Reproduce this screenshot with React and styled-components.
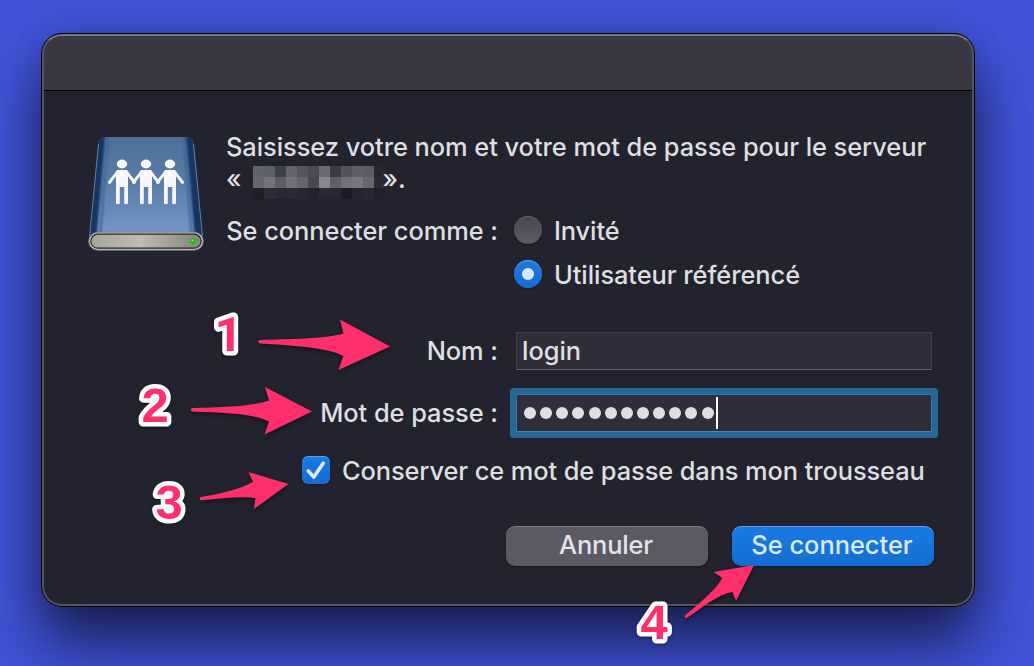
import React from 'react';
import styled, { createGlobalStyle, css } from 'styled-components';

const GlobalStyle = createGlobalStyle`
  *, *::before, *::after { box-sizing: border-box; }
  html, body { margin: 0; height: 100%; overflow: hidden; }
  body { background: #4152d6; }
`;

const Desktop = styled.main`
  position: relative;
  width: 1034px;
  height: 666px;
  padding: 33px 59px 59px 41px;
  overflow: hidden;
  background: #4153d8;
  font-family: Inter, 'Liberation Sans', sans-serif;
  font-size: 25.4px;
  font-weight: 450;
  line-height: 32px;
  color: #dfdfe1;
`;

const Dialog = styled.section`
  display: flex;
  flex-direction: column;
  height: 574px;
  border: 1px solid #000;
  border-radius: 21px;
  background: #22232f;
  overflow: hidden;
  position: relative;

  &::after {
    content: '';
    position: absolute;
    inset: 0;
    border: 2px solid #55555f;
    border-top-color: #77777f;
    border-radius: 20px;
    pointer-events: none;
  }
`;

const Shadow = styled.div`
  border-radius: 21px;
  box-shadow: 0 36px 60px rgba(0, 0, 0, 0.62), 0 0 30px rgba(0, 0, 0, 0.12);
`;

const TitleBar = styled.header`
  height: 57px;
  flex: none;
  background: #393842;
  border-bottom: 1px solid #000;
`;

const Body = styled.div`
  display: grid;
  grid-template-columns: 116px 1fr;
  column-gap: 22px;
  padding: 40px 36px 0 46px;
`;

const IconCell = styled.div`
  padding-top: 5px;
  svg { display: block; }
`;

const Content = styled.div`
  display: flex;
  flex-direction: column;
  min-width: 0;
`;

const Text = styled.span`
  white-space: pre;
  letter-spacing: ${(p) => p.$track || 0}px;
`;

const Message = styled.div`
  display: flex;
  flex-direction: column;
  height: 64px;
  margin-bottom: 20px;
`;

const MessageLine = styled.div`
  display: flex;
  height: 32px;
`;

const Redaction = styled.span`
  display: grid;
  grid-template-columns: repeat(12, 11px);
  grid-auto-rows: 11px;
  width: 129px;
  margin: 3px 0 0 12px;
`;

const Block = styled.i`
  background: ${(p) => p.$tone};
`;

const FormRow = styled.div`
  display: grid;
  grid-template-columns: 272px 1fr;
  column-gap: 17px;
  height: 32px;
  margin-bottom: ${(p) => p.$gap}px;
`;

const Label = styled.label`
  text-align: right;
  white-space: pre;
  letter-spacing: -0.04px;
`;

const Option = styled.div`
  display: flex;
  gap: 12px;
`;

const blueFill = css`
  background: linear-gradient(#187be6, #166dd0);
  box-shadow: inset 0 1px 0 rgba(255, 255, 255, 0.28), 0 1px 2px rgba(0, 0, 0, 0.35);
`;

const greyFill = css`
  background: linear-gradient(#474650, #5d5d67);
  box-shadow: inset 0 1px 0 rgba(255, 255, 255, 0.14), 0 1px 2px rgba(0, 0, 0, 0.35);
`;

const Radio = styled.span`
  display: flex;
  align-items: center;
  justify-content: center;
  width: 28px;
  height: 28px;
  margin: 1px 0 0 -1px;
  border-radius: 50%;
  ${(p) => (p.$checked ? blueFill : greyFill)}

  &::after {
    content: '';
    width: 12px;
    height: 12px;
    border-radius: 50%;
    background: ${(p) => (p.$checked ? '#dce9fa' : 'transparent')};
  }
`;

const Field = styled.div`
  display: flex;
  align-items: center;
  width: 416px;
  height: 38px;
  margin: -3px 0 0 1px;
  padding: 0 0 0 5px;
  background: #2f2e3a;
  border: 1px solid #403f4a;
  border-bottom-color: #686771;
  ${(p) =>
    p.$focused &&
    css`
      border-color: #2f79ad;
      border-bottom-color: #4388b8;
      box-shadow: 0 0 0 6px #276796;
      border-radius: 1px;
    `}
`;

const Dots = styled.span`
  display: flex;
  gap: 4.15px;
  margin-left: 2px;
`;

const Dot = styled.i`
  width: 12px;
  height: 12px;
  border-radius: 50%;
  background: #dfdfe1;
`;

const Caret = styled.span`
  width: 2px;
  height: 32px;
  margin-left: 2px;
  background: #fff;
`;

const CheckRow = styled.div`
  display: flex;
  gap: 12px;
  height: 32px;
  margin: 0 0 39px 76px;
`;

const Checkbox = styled.span`
  width: 28px;
  height: 28px;
  margin-top: 1px;
  border-radius: 6px;
  ${blueFill}
  svg { display: block; }
`;

const Actions = styled.div`
  display: flex;
  gap: 24px;
  padding-left: 280px;
`;

const Button = styled.button`
  width: 202px;
  height: 40px;
  padding: 0 2px 2px 0;
  border: 0;
  border-radius: 9px;
  font: inherit;
  line-height: 36px;
  color: #e3e3e5;
  background: #5b5a64;
  box-shadow: inset 0 1px 0 rgba(255, 255, 255, 0.2), 0 1px 2px rgba(0, 0, 0, 0.4);
  ${(p) =>
    p.$primary &&
    css`
      ${blueFill}
      color: #dce9fb;
    `}
`;

const Annotations = styled.svg`
  position: absolute;
  inset: 0;
  pointer-events: none;
`;

const Arrows = styled.g`
  fill: #ff2f6d;
  filter: drop-shadow(0 2px 2px rgba(0, 0, 0, 0.45));
`;

const StepNumber = styled.text`
  font: bold 49px ${(p) => (p.$face ? `${p.$face}, ` : '')}'Liberation Sans', sans-serif;
  fill: #ff2f6d;
  stroke: #fff;
  stroke-width: 9px;
  stroke-linejoin: round;
  paint-order: stroke fill;
  filter: drop-shadow(0 1px 1.5px rgba(0, 0, 0, 0.45));
`;

const tones = [
  '#62626d', '#5b6069', '#3f3f4b', '#63636d', '#54545f', '#4b4b56', '#696973', '#3b3b47', '#53535e', '#5e5e69', '#5c5c67', '#272733',
  '#666671', '#73737e', '#5d5d68', '#70707a', '#64646f', '#484853', '#87878c', '#5f5f69', '#70707b', '#767681', '#66666f', '#2b2b37',
  '#1f1f2c', '#2e2b37', '#292935', '#2c2835', '#272733', '#22222f', '#282935', '#282935', '#1b1b29', '#242531', '#272834', '#20212d',
];

function Person({ x }) {
  return (
    <g transform={`translate(${x} 0)`} fill="none" stroke="#f6f7f9" strokeLinecap="round" strokeLinejoin="round">
      <ellipse cx="0" cy="28" rx="5.2" ry="4.4" fill="#f6f7f9" stroke="none" />
      <path d="M-4 34H4Q5.500 34 6 36V51H-6V36Q-5.500 34 -4 34Z" fill="#f6f7f9" stroke="none" />
      <path d="M-4.500 35.8L-12.500 46.400M4.500 35.8L12.500 46.400" strokeWidth="3" />
      <path d="M-4.1 48V66.400M4.1 48V66.400" strokeWidth="3.800" />
    </g>
  );
}

function ServerDrive() {
  return (
    <svg width="116" height="116" viewBox="0 0 116 116">
      <defs>
        <linearGradient id="face" x1="0" y1="0" x2="0" y2="1">
          <stop offset="0" stopColor="#4b7098" />
          <stop offset="0.5" stopColor="#5b7fab" />
          <stop offset="1" stopColor="#7798c4" />
        </linearGradient>
        <linearGradient id="base" x1="0" y1="0" x2="1" y2="0">
          <stop offset="0" stopColor="#a6a59f" />
          <stop offset="0.45" stopColor="#bebbb2" />
          <stop offset="1" stopColor="#858276" />
        </linearGradient>
        <filter id="soften" x="-20%" y="-5%" width="140%" height="110%">
          <feGaussianBlur stdDeviation="1 0" />
        </filter>
        <clipPath id="shell">
          <path d="M17 1H99Q105 1 106 8L115 102H1L10 8Q11 1 17 1Z" />
        </clipPath>
      </defs>
      <g clipPath="url(#shell)">
        <rect width="116" height="102" fill="url(#face)" />
        <g filter="url(#soften)">
          <path d="M10 0H17L8.500 102H0V98Z" fill="#123461" />
          <path d="M98 0H106L116 98V102H107Z" fill="#123461" />
          <path d="M20 0L12 102" fill="none" stroke="#3d6496" strokeWidth="2" />
          <path d="M95.500 0L104 102" fill="none" stroke="#3d6496" strokeWidth="2" />
        </g>
        <path d="M10.500 8L1.500 100M105.500 8L114.500 100" stroke="#6f8cb2" strokeWidth="0.9" />
      </g>
      <Person x={34} />
      <Person x={58} />
      <Person x={82} />
      <rect x="0.7" y="96.2" width="114.6" height="18" rx="9" fill="#c8c8c4" stroke="#747a80" strokeWidth="0.8" />
      <rect x="2.8" y="98.2" width="110.4" height="14" rx="7" fill="url(#base)" stroke="#242424" strokeWidth="1.2" />
      <circle cx="104.8" cy="105.2" r="2.9" fill="#12c512" />
      <circle cx="104.5" cy="104.6" r="1.2" fill="#47f13c" />
    </svg>
  );
}

export default function App() {
  return (
    <Desktop>
      <GlobalStyle />
      <Shadow>
        <Dialog>
          <TitleBar />
          <Body>
            <IconCell><ServerDrive /></IconCell>
            <Content>
              <Message>
                <MessageLine>
                  <Text $track={-0.04}>Saisissez votre nom et votre mot de passe pour le serveur</Text>
                </MessageLine>
                <MessageLine>
                  <Text>«</Text>
                  <Redaction>
                    {tones.map((tone, i) => <Block key={i} $tone={tone} />)}
                  </Redaction>
                  <Text>».</Text>
                </MessageLine>
              </Message>

              <FormRow $gap={12}>
                <Label>Se connecter comme :</Label>
                <Option><Radio /><Text $track={-0.1}>Invité</Text></Option>
              </FormRow>
              <FormRow $gap={44}>
                <span />
                <Option><Radio $checked /><Text $track={-0.05}>Utilisateur référencé</Text></Option>
              </FormRow>
              <FormRow $gap={30}>
                <Label>Nom :</Label>
                <Field><Text>login</Text></Field>
              </FormRow>
              <FormRow $gap={26}>
                <Label>Mot de passe :</Label>
                <Field $focused>
                  <Dots>{Array.from({ length: 12 }, (_, i) => <Dot key={i} />)}</Dots>
                  <Caret />
                </Field>
              </FormRow>
              <CheckRow>
                <Checkbox>
                  <svg width="28" height="28" viewBox="0 0 28 28" fill="none">
                    <path d="M6.3 15L11.8 21L21.2 7.2" stroke="#dfeafa" strokeWidth="3.6" strokeLinecap="round" strokeLinejoin="round" />
                  </svg>
                </Checkbox>
                <Text $track={-0.09}>Conserver ce mot de passe dans mon trousseau</Text>
              </CheckRow>
              <Actions>
                <Button><Text $track={-0.15}>Annuler</Text></Button>
                <Button $primary><Text>Se connecter</Text></Button>
              </Actions>
            </Content>
          </Body>
        </Dialog>
      </Shadow>

      <Annotations width="1034" height="666" viewBox="0 0 1034 666">
        <Arrows>
          <path d="M260 340C290 339 325 339 343.5 333.5L340 319.5L390 346.5L338.5 370L343.3 356C326 347 290 345.5 260 343.6A1.8 1.8 0 0 1 260 340Z" />
          <path d="M192.5 408C220 407 250 407 269 400.5L265 387L312 411.5L264.5 434.5L269 421.5C252 413 222 413 192.5 411.6A1.8 1.8 0 0 1 192.5 408Z" />
          <path d="M201 497C220 494 240 489 253 482L248.5 472L288.5 484L254 509L255.5 498C240 496 220 499 201.5 500.2A1.6 1.6 0 0 1 201 497Z" />
          <path d="M685 615.5C698 604 714 592 722.5 578L713.5 572L754 565L736 601L732.5 592C718 594 702 608 687 617.8A1.6 1.6 0 0 1 685 615.5Z" />
        </Arrows>
        <StepNumber x="214.5" y="351" $face="Roboto">1</StepNumber>
        <StepNumber x="141.5" y="422">2</StepNumber>
        <StepNumber x="155.5" y="519">3</StepNumber>
        <StepNumber x="640.5" y="639">4</StepNumber>
      </Annotations>
    </Desktop>
  );
}
